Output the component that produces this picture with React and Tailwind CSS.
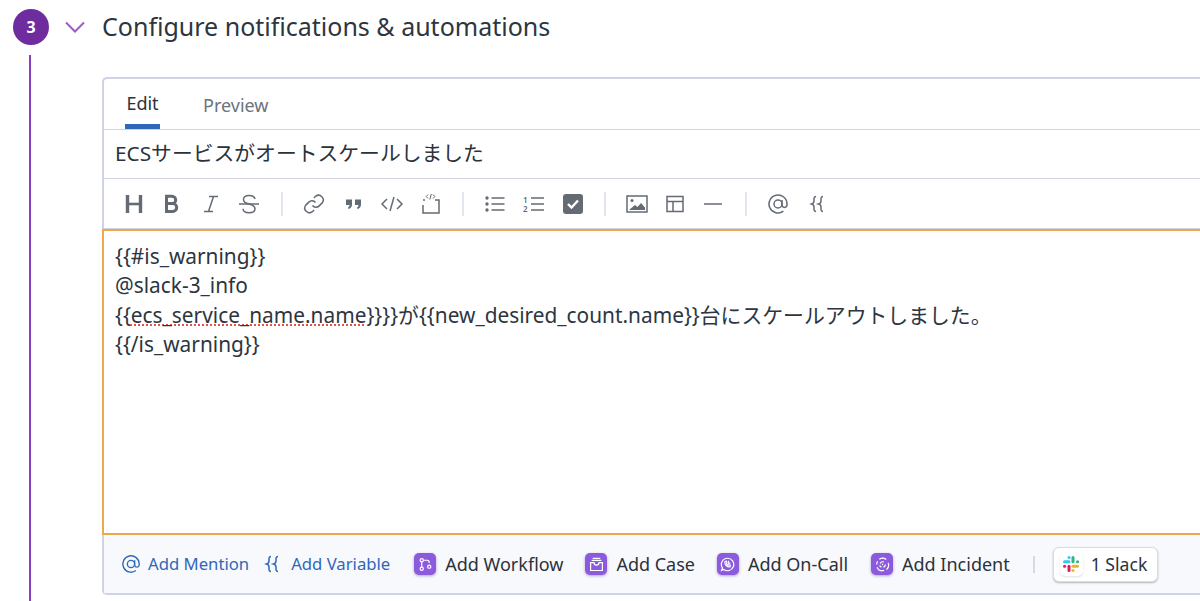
const font = { fontFamily: '"Noto Sans", "Noto Sans CJK JP", sans-serif' };

function Ico({ w = 22, h = 22, vb = '0 0 22 22', children, className = 'text-[#646b74]' }) {
  return (
    <svg width={w} height={h} viewBox={vb} fill="none" stroke="currentColor" strokeWidth="1.5" className={`shrink-0 ${className}`}>
      {children}
    </svg>
  );
}

function Sep() {
  return <div className="w-[2px] h-[24px] bg-[#e1e5ee] shrink-0" />;
}

const AtPath = (
  <>
    <circle cx="11" cy="11" r="4" />
    <path d="M15 7v5.500a2.600 2.600 0 0 0 5 0V11a9 9 0 1 0-3.600 7.200" />
  </>
);

function Braces({ className = 'text-[#646b74]' }) {
  return (
    <Ico w={18} h={20} vb="0 0 18 20" className={className}>
      <path d="M7 2.500C4.500 2.500 5 5 5 7s-1 2.600-2.500 3C4 10.400 5 11 5 13s-.5 4.500 2 4.500" />
      <path d="M14 2.500c-2.500 0-2 2.500-2 4.500s-1 2.600-2.500 3c1.500.400 2.500 1 2.500 3s-.5 4.500 2 4.500" />
    </Ico>
  );
}

function Toolbar() {
  return (
    <div className="h-[50px] flex items-center pl-[20px] border-b border-[#cfd3e3]">
      <Ico w={20} h={20} vb="0 0 20 20">
        <path d="M3.500 1v18M16.500 1v18" strokeWidth="3.400" />
        <path d="M3.500 10h13" strokeWidth="2.600" />
      </Ico>
      <Ico w={20} h={20} vb="0 0 20 20" className="text-[#646b74] ml-[18px]">
        <path d="M4.500 2.200h5.500a3.600 3.600 0 0 1 0 7.400H4.500zM4.500 9.600h6.300a3.800 3.800 0 0 1 0 7.800H4.500z" strokeWidth="3" />
      </Ico>
      <Ico w={20} h={20} vb="0 0 20 20" className="text-[#646b74] ml-[19px]">
        <path d="M8 2.500h9M3 17.500h9M12.500 2.500 7.500 17.500" />
      </Ico>
      <Ico w={22} h={22} className="text-[#646b74] ml-[17px]">
        <path d="M1 11h20" />
        <path d="M17 6c-.5-2.500-3-3.500-6-3.500S5.500 4 5.500 6.500C5.500 9 8 10.300 11 11c3.200.800 6 2 6 4.700s-2.800 4-6 4-5.800-1.300-6-4" />
      </Ico>
      <div className="ml-[21px]"><Sep /></div>
      <Ico w={24} h={24} vb="0 0 24 24" className="text-[#646b74] ml-[19px]">
        <path d="M10.500 13.500a4.500 4.500 0 0 0 6.700.400l3-3a4.700 4.700 0 0 0-6.600-6.600l-1.700 1.700" />
        <path d="M13.500 10.500a4.500 4.500 0 0 0-6.700-.400l-3 3a4.700 4.700 0 0 0 6.600 6.600l1.700-1.700" />
      </Ico>
      <Ico w={18} h={14} vb="0 0 18 14" className="text-[#646b74] ml-[19px]">
        <path d="M1 2.500h6v5c0 2.500-1.500 4-3.500 4.500l-.5-1.500c1-.5 1.500-1.500 1.500-2.500H1zM10 2.500h6v5c0 2.500-1.500 4-3.500 4.500l-.5-1.500c1-.5 1.500-1.500 1.500-2.500H10z" fill="currentColor" stroke="none" />
      </Ico>
      <Ico w={24} h={18} vb="0 0 24 18" className="text-[#646b74] ml-[17px]">
        <path d="M7 4 2 9l5 5M17 4l5 5-5 5M14 2l-4 14" />
      </Ico>
      <Ico w={20} h={22} vb="0 0 20 22" className="text-[#646b74] ml-[17px]">
        <path d="M2 12v8h16V7h-4M2 7h2" />
        <path d="M7 1.500 5.200 3.500 7 5.500M12 1.500l1.800 2-1.800 2M10.300 1 8.800 6.500" strokeWidth="1" />
      </Ico>
      <div className="ml-[21px]"><Sep /></div>
      <Ico w={20} h={18} vb="0 0 20 18" className="text-[#646b74] ml-[21px]">
        <path d="M6.500 3h13M6.500 9h13M6.500 15h13" />
        <circle cx="2" cy="3" r="1.700" fill="currentColor" stroke="none" />
        <circle cx="2" cy="9" r="1.700" fill="currentColor" stroke="none" />
        <circle cx="2" cy="15" r="1.700" fill="currentColor" stroke="none" />
      </Ico>
      <div className="ml-[18px] shrink-0 w-[21px] h-[22px] flex items-center">
        <div className="flex flex-col justify-between h-[18px] w-[7px] text-[8px] leading-[9px] font-semibold text-[#646b74]">
          <span>1</span><span>2</span>
        </div>
        <Ico w={13} h={18} vb="0 0 13 18" className="text-[#646b74] ml-[1px]">
          <path d="M0 3h13M0 9h13M0 15h13" />
        </Ico>
      </div>
      <div className="ml-[19px] w-[20px] h-[20px] rounded-[3px] bg-[#646b74] flex items-center justify-center shrink-0">
        <svg width="14" height="12" viewBox="0 0 14 12" fill="none" stroke="white" strokeWidth="2.400"><path d="m2 6 3.500 3.500L12 2.500" /></svg>
      </div>
      <div className="ml-[21px]"><Sep /></div>
      <Ico w={22} h={20} vb="0 0 22 20" className="text-[#646b74] ml-[20px]">
        <rect x="1" y="2" width="20" height="16" />
        <circle cx="6" cy="6.500" r="1.500" fill="currentColor" stroke="none" />
        <path d="M3 16l6-5 2.500 2 3.500-4 4 4.500V16z" fill="currentColor" stroke="none" />
      </Ico>
      <Ico w={18} h={18} vb="0 0 18 18" className="text-[#646b74] ml-[18px]">
        <rect x="1" y="1.500" width="16" height="15" />
        <path d="M1 6.500h16M7 6.500v10" />
      </Ico>
      <Ico w={20} h={4} vb="0 0 20 4" className="text-[#646b74] ml-[19px]">
        <path d="M1 2h18" />
      </Ico>
      <div className="ml-[22px]"><Sep /></div>
      <Ico w={22} h={22} className="text-[#646b74] ml-[20px]">{AtPath}</Ico>
      <div className="ml-[20px]"><Braces /></div>
    </div>
  );
}

function PurpleIcon({ children }) {
  return (
    <div className="w-[22px] h-[22px] rounded-[5px] bg-[#8c5bdd] flex items-center justify-center shadow-[0_1px_3px_rgba(90,50,170,0.45)] shrink-0">
      <svg width="15" height="15" viewBox="0 0 14 14" fill="none" stroke="white" strokeWidth="1.100">{children}</svg>
    </div>
  );
}

function Action({ label, children, className = '' }) {
  return (
    <div className={`flex items-center gap-[9px] ${className}`}>
      <PurpleIcon>{children}</PurpleIcon>
      <span className="text-[#2b323b] text-[18px]">{label}</span>
    </div>
  );
}

function SlackLogo() {
  return (
    <svg width="18" height="18" viewBox="0 0 18 18" fill="none" strokeWidth="3" strokeLinecap="round">
      <path d="M7 2.500v.1" stroke="#36c5f0" />
      <path d="M2.500 6.800h4.500" stroke="#36c5f0" />
      <path d="M11 2.500v4.300" stroke="#2eb67d" />
      <path d="M15.500 6.800h.1" stroke="#2eb67d" />
      <path d="M11 11.200h4.500" stroke="#ecb22e" />
      <path d="M11 15.500v.1" stroke="#ecb22e" />
      <path d="M7 11.200v4.300" stroke="#e01e5a" />
      <path d="M2.500 11.200h.1" stroke="#e01e5a" />
    </svg>
  );
}

function Footer() {
  return (
    <div className="h-[58px] bg-[#f8f9fc] flex items-center pl-[17px] text-[16.700px]">
      <Ico w={20} h={20} className="text-[#2f68b8]">{AtPath}</Ico>
      <span className="ml-[7px] text-[#2f68b8]">Add Mention</span>
      <div className="ml-[15px]"><Braces className="text-[#2f68b8]" /></div>
      <span className="ml-[9px] text-[#2f68b8]">Add Variable</span>
      <Action label="Add Workflow" className="ml-[24px]">
        <circle cx="3.500" cy="3" r="1.500" /><circle cx="3.500" cy="11" r="1.500" /><circle cx="10.500" cy="9" r="1.500" />
        <path d="M3.500 4.500v5M5 3h3.500c1.500 0 2 1 2 2.500" />
      </Action>
      <Action label="Add Case" className="ml-[22px]">
        <path d="M3.500 1.200h7M2.500 3.200h9M1.500 5.300h3.200c0 1.300 1 2.200 2.300 2.200s2.300-.9 2.300-2.200h3.200v7.300h-11z" />
      </Action>
      <Action label="Add On-Call" className="ml-[22px]">
        <path d="M7 1.200a5.800 5.800 0 1 1-3.500 10.400L1.500 12.500l.8-2.200A5.800 5.800 0 0 1 7 1.200z" />
        <path d="M4.500 4.500c-.3 2.500 2 5 4.800 4.800l.4-1.500-1.500-.7-.7.600c-.8-.4-1.300-1-1.500-1.700l.6-.7-.7-1.500zM8 3.500v2.300h1.800" />
      </Action>
      <Action label="Add Incident" className="ml-[23px]">
        <path d="M4 2.200a5.600 5.600 0 0 1 6.500.1M12.300 5.500a5.600 5.600 0 0 1-1.600 6.300M8.500 12.500a5.600 5.600 0 0 1-6.600-3M1.500 7A5.600 5.600 0 0 1 2.500 4" />
        <path d="M4.800 6a2.600 2.600 0 0 1 3.500-1.300M9.700 7a2.700 2.700 0 0 1-1.800 2.500M6 9.500A2.700 2.700 0 0 1 4.300 8" />
        <circle cx="7" cy="7" r=".7" fill="white" stroke="none" />
      </Action>
      <div className="ml-[23px] w-[2px] h-[17px] bg-[#d6dae6]" />
      <div className="ml-[18px] h-[35px] w-[105px] bg-white border border-[#d9dce6] rounded-[6px] shadow-[0_1px_2px_rgba(0,0,0,0.28)] flex items-center pl-[6px] gap-[8px] text-[#2b323b] text-[17.600px]">
        <div className="w-[23px] h-[23px] rounded-[5px] bg-white shadow-sm flex items-center justify-center">
          <SlackLogo />
        </div>
        <span>1 Slack</span>
      </div>
    </div>
  );
}

export default function App() {
  return (
    <div style={font} className="w-[1200px] h-[601px] bg-white overflow-hidden flex text-[#2b323b]">
      <div className="w-[102px] shrink-0 flex flex-col">
        <div className="flex items-start pl-[13px] pt-[9px]">
          <div className="w-[36px] h-[36px] rounded-full bg-[#6f2c9f] flex items-center justify-center text-white text-[16px] font-bold shrink-0">3</div>
          <svg width="22" height="12" viewBox="0 0 22 12" fill="none" stroke="#9c5cc4" strokeWidth="2" className="ml-[15px] mt-[12px]">
            <path d="m2 1.500 9 9 9-9" />
          </svg>
        </div>
        <div className="ml-[29px] mt-[10px] w-[2px] flex-1 bg-[#8a3fc0]" />
      </div>
      <div className="flex-1 min-w-0">
        <div className="h-[77px] pt-[8px] text-[25px] leading-[36px] text-[#2d3640]">Configure notifications &amp; automations</div>
        <div className="w-[1200px] border-2 border-[#cfd3e3] rounded-[5px] border-r-0">
          <div className="h-[51px] flex items-end border-b border-[#cfd3e3] pl-[21px] text-[18px]">
            <div className="w-[35px] h-[50px] flex flex-col items-center justify-between">
              <span className="mt-[12px] leading-[24px] text-[#2b323b]">Edit</span>
              <div className="w-[35px] h-[5px] bg-[#2f68b8]" />
            </div>
            <span className="ml-[43px] mb-[12px] leading-[24px] text-[#6b737d]">Preview</span>
          </div>
          <div className="h-[49px] flex items-center border-b border-[#cfd3e3] pl-[11px] text-[20.800px]">ECSサービスがオートスケールしました</div>
          <Toolbar />
          <div className="h-[306px] border-y-2 border-l-2 -ml-[2px] border-[#eda84f] pt-[11px] pl-[11px] text-[20.850px] leading-[29.300px] text-[#2d3640]">
            <div>{'{{#is_warning}}'}</div>
            <div>@slack-3_info</div>
            <div>
              {'{{'}
              <span className="underline decoration-dotted decoration-[#e0524d] underline-offset-[2px]">ecs_service_name.name</span>
              {'}}}}が{{new_desired_count.name}}台にスケールアウトしました。'}
            </div>
            <div>{'{{/is_warning}}'}</div>
          </div>
          <Footer />
        </div>
      </div>
    </div>
  );
}
